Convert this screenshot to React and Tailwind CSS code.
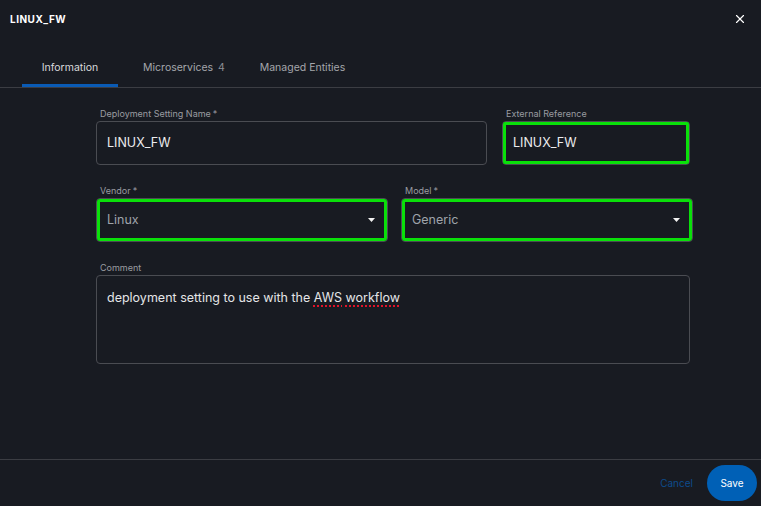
import { X } from 'lucide-react'

function Field({ label, required, className, labelPad = 'pl-[4px]', children }) {
  return (
    <div className={`flex flex-col ${className}`}>
      <div className={`h-[12px] leading-[12px] text-[9px] text-[#9a9ca1] ${labelPad} mb-[1px]`}>
        {label}
        {required && <span className="ml-[2px]">*</span>}
      </div>
      {children}
    </div>
  )
}

function SelectBox({ value }) {
  return (
    <div className="relative h-[44px] rounded-[4px] border border-[#4a4c52] flex items-center justify-between pl-[10px] pr-[12px]">
      <span className="text-[12.5px] text-[#9fa3aa]">{value}</span>
      <svg width="7" height="4" viewBox="0 0 7 4">
        <path d="M0 0h7L3.5 4z" fill="#f2f2f2" />
      </svg>
      {/* highlight */}
      <div className="absolute inset-0 rounded-[3px] border-[3px] border-[#0ae00a] pointer-events-none" />
    </div>
  )
}

export default function App() {
  return (
    <div
      className="w-[761px] h-[506px] bg-[#181b22] flex flex-col text-[#e8e8ea] overflow-hidden"
      style={{ fontFamily: 'Inter, "Noto Sans", sans-serif' }}
    >
      {/* header */}
      <div className="h-[38px] flex items-center justify-between pl-[10px] pr-[14px]">
        <span className="text-[10px] font-bold tracking-[0.5px] text-white">LINUX_FW</span>
        <X size={14} strokeWidth={2} className="text-white" />
      </div>

      {/* tabs */}
      <div className="h-[50px] border-b border-[#3b3d43] flex pl-[22px]">
        <div className="w-[96px] h-full flex items-center justify-center pt-[13px] border-b-[3px] border-[#0a5bb5] text-[10.5px] text-[#d9dadd]">
          Information
        </div>
        <div className="w-[120px] ml-[6px] h-full flex items-center justify-center pt-[13px] border-b-[3px] border-transparent text-[10.5px] text-[#a5a7ac]">
          Microservices<span className="ml-[5px] text-[#8c8f94]">4</span>
        </div>
        <div className="w-[117px] h-full flex items-center justify-center pt-[13px] border-b-[3px] border-transparent text-[10.5px] text-[#a5a7ac]">
          Managed Entities
        </div>
      </div>

      {/* form */}
      <div className="flex-1 pt-[20px] pl-[96px] flex flex-col gap-[20px]">
        <div className="flex gap-[15px]">
          <Field label="Deployment Setting Name" required className="w-[391px]">
            <div className="h-[44px] rounded-[4px] border border-[#4a4c52] flex items-center pl-[10px] text-[12.5px] text-[#ececee]">
              LINUX_FW
            </div>
          </Field>
          <Field label="External Reference" className="w-[188px]">
            <div className="relative h-[44px] rounded-[4px] border border-[#4a4c52] flex items-center pl-[10px] text-[12.5px] text-[#ececee]">
              LINUX_FW
              <div className="absolute inset-0 rounded-[2px] border-[3px] border-[#0ae00a] pointer-events-none" />
            </div>
          </Field>
        </div>

        <div className="flex gap-[13px]">
          <Field label="Vendor" required className="w-[292px]">
            <SelectBox value="Linux" />
          </Field>
          <Field label="Model" required className="w-[292px]">
            <SelectBox value="Generic" />
          </Field>
        </div>

        <Field label="Comment" className="w-[594px]">
          <div className="h-[89px] rounded-[4px] border border-[#4a4c52] pl-[10px] pt-[13px] text-[12.5px] text-[#e4e5e7]">
            deployment setting to use with the{' '}
            <span className="underline decoration-dotted decoration-[#e0142a] decoration-[1.5px] underline-offset-[3px]">AWS</span>{' '}
            <span className="underline decoration-dotted decoration-[#e0142a] decoration-[1.5px] underline-offset-[3px]">workflow</span>
          </div>
        </Field>
      </div>

      {/* footer */}
      <div className="h-[47px] border-t border-[#3b3d43] flex items-center justify-end pr-[4px] gap-[14px]">
        <button className="text-[10px] text-[#0d4b8c]">Cancel</button>
        <button className="w-[50px] h-[36px] rounded-full bg-[#0060b6] text-[10px] text-white">Save</button>
      </div>
    </div>
  )
}
